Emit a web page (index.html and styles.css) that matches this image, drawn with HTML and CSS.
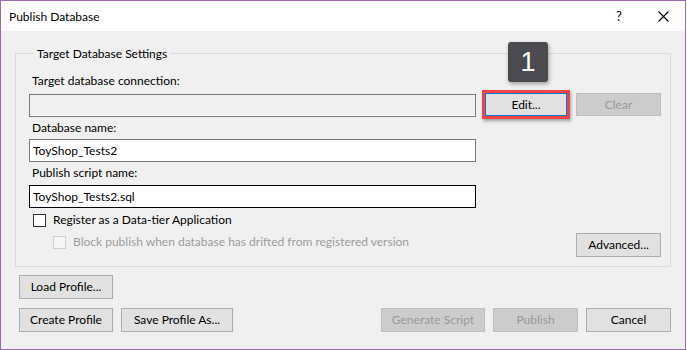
FILE: index.html
```html
<!DOCTYPE html>
<html>
<head>
<meta charset="utf-8">
<title>Publish Database</title>
<link rel="stylesheet" href="styles.css">
</head>
<body>
<div class="window">
  <div class="titlebar">
    <span class="title">Publish Database</span>
    <span class="tb-help">?</span>
    <span class="tb-close">
      <svg width="11" height="11" viewBox="0 0 11 11"><path d="M0.5 0.5 L10.5 10.5 M10.5 0.5 L0.5 10.5" stroke="#000" stroke-width="1.1" fill="none"/></svg>
    </span>
  </div>
  <div class="content">
    <fieldset class="group">
      <legend class="legend">Target Database Settings</legend>
      <div class="lbl lbl-first">Target database connection:</div>
      <div class="conn-row">
        <div class="textbox readonly"></div>
        <div class="edit-wrap">
          <button class="btn btn-edit">Edit...</button>
          <span class="callout">1</span>
        </div>
        <button class="btn btn-clear disabled">Clear</button>
      </div>
      <div class="lbl">Database name:</div>
      <div class="textbox">ToyShop_Tests2</div>
      <div class="lbl">Publish script name:</div>
      <div class="textbox focused">ToyShop_Tests2.sql</div>
      <div class="bottom-row">
        <div class="checks">
          <label class="check"><span class="box"></span>Register as a Data-tier Application</label>
          <label class="check sub disabled-text"><span class="box box-disabled"></span>Block publish when database has drifted from registered version</label>
        </div>
        <button class="btn btn-advanced">Advanced...</button>
      </div>
    </fieldset>
    <div class="actions">
      <button class="btn btn-load">Load Profile...</button>
    </div>
    <div class="actions actions-last">
      <button class="btn btn-create">Create Profile</button>
      <button class="btn btn-save">Save Profile As...</button>
      <span class="spacer"></span>
      <button class="btn btn-gen disabled">Generate Script</button>
      <button class="btn btn-pub disabled">Publish</button>
      <button class="btn btn-cancel">Cancel</button>
    </div>
  </div>
</div>
</body>
</html>
```
FILE: styles.css
```css
* { box-sizing: border-box; }
html, body { margin: 0; padding: 0; background: #ffffff; }
body {
  font-family: "Lato", "Noto Sans", sans-serif;
  font-size: 12px;
  color: #000;
}
.window {
  width: 686px;
  height: 350px;
  border: 1px solid #9a6aab;
  background: #f0f0f0;
  display: flex;
  flex-direction: column;
}
.titlebar {
  height: 30px;
  background: #ffffff;
  display: flex;
  align-items: center;
  flex: none;
}
.title {
  padding-left: 8px;
  font-size: 12px;
  flex: 1;
}
.tb-help {
  width: 14px;
  text-align: center;
  font-size: 13px;
  margin-right: 32px;
}
.tb-close {
  display: flex;
  margin-right: 16px;
}
.content {
  padding: 14px 14px 0 14px;
  display: flex;
  flex-direction: column;
}
.group {
  margin: 0;
  border: 1px solid #dcdcdc;
  padding: 7px 9px 7px 13px;
  display: flex;
  flex-direction: column;
  height: 222px;
}
.legend {
  padding: 0 3px;
  margin-left: 5px;
  line-height: 16px;
  position: relative;
  top: 1px;
}
.lbl {
  line-height: 16px;
  margin-left: 3px;
  margin-top: 3px;
}
.lbl-first { margin-top: 5px; }
.textbox {
  width: 447px;
  height: 23px;
  border: 1px solid #7a7a7a;
  background: #fff;
  margin-top: 3px;
  padding: 2px 3px;
  line-height: 17px;
}
.textbox.focused { border-color: #000; margin-top: 4px; }
.textbox.readonly {
  background: #f0f0f0;
  margin-top: 0;
  box-shadow: inset 0 -1px 0 #fff;
}
.conn-row {
  display: flex;
  align-items: flex-start;
  margin-top: 5px;
}
.edit-wrap {
  position: relative;
  margin-left: 9px;
  margin-top: -1px;
}
.btn {
  font-family: inherit;
  font-size: 12px;
  color: #000;
  background: #e1e1e1;
  border: 1px solid #adadad;
  height: 24px;
  padding: 0;
  margin: 0;
  line-height: 20px;
}
.btn.disabled {
  background: #cccccc;
  border-color: #bfbfbf;
  color: #9a9a9a;
}
.btn-edit {
  width: 82px;
  height: 23px;
  border-color: #0078d7;
  display: block;
}
.edit-wrap::after {
  content: "";
  position: absolute;
  left: -3px;
  top: -3px;
  right: -3px;
  bottom: -3px;
  border: 3px solid #ee4448;
  box-shadow: 1px 2px 3px rgba(0,0,0,0.35);
}
.callout {
  position: absolute;
  left: 23px;
  top: -51px;
  width: 40px;
  height: 40px;
  background: #4a4a50;
  color: #fff;
  border-radius: 3px;
  font-family: "Liberation Sans", sans-serif;
  font-size: 27px;
  line-height: 40px;
  text-align: center;
  box-shadow: 1px 2px 4px rgba(0,0,0,0.35);
}
.btn-clear {
  width: 85px;
  height: 23px;
  margin-left: 9px;
  margin-top: -1px;
}
.bottom-row {
  display: flex;
  justify-content: space-between;
  align-items: flex-start;
  margin-top: 4px;
}
.checks { display: flex; flex-direction: column; }
.check {
  display: flex;
  align-items: center;
  line-height: 16px;
  margin-left: 4px;
}
.check .box {
  width: 13px;
  height: 13px;
  border: 1px solid #333;
  background: #fff;
  margin-right: 7px;
}
.check.sub { margin-left: 24px; margin-top: 6px; }
.box-disabled { border-color: #cfcfcf !important; background: #f7f7f7 !important; }
.disabled-text { color: #9d9d9d; }
.btn-advanced {
  width: 85px;
  margin-top: 21px;
}
.actions {
  display: flex;
  gap: 8px;
  margin-top: 8px;
  padding-left: 4px;
}
.actions-last { margin-top: 9px; }
.spacer { flex: 1; }
.btn-load, .btn-create { width: 94px; }
.btn-save { width: 112px; }
.btn-gen { width: 104px; }
.btn-pub, .btn-cancel { width: 85px; }
```
